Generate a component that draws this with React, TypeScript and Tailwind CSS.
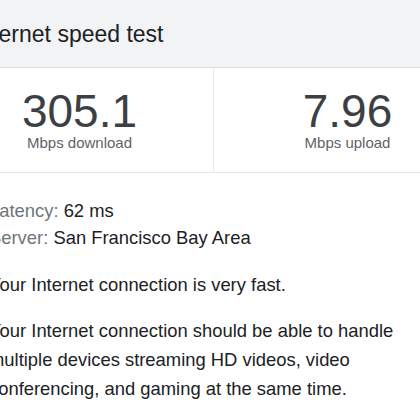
// Speed test result card, cropped on the left like the reference.
const font = { fontFamily: '"Liberation Sans", Arial, sans-serif' }

function Stat({ value, label, divider }: { value: string; label: string; divider?: boolean }) {
  return (
    <div className={`flex flex-col items-center pt-[20px] pb-[20px] ${divider ? 'border-r border-[#e8eaed]' : ''}`}>
      <div className="text-[46px] leading-[46px] text-[#3c4043]">{value}</div>
      <div className="text-[15px] leading-[18px] text-[#5f6368]">{label}</div>
    </div>
  )
}

export default function App() {
  return (
    <div className="w-[420px] h-[420px] overflow-hidden bg-white" style={font}>
      <div className="w-[535px] -ml-[54px]">
        <header className="bg-[#f1f3f4] border-b border-[#dadce0] pl-[27px] pt-[19px] pb-[18px]">
          <h1 className="text-[23px] leading-[30px] text-[#202124] whitespace-nowrap">Internet speed test</h1>
        </header>
        <div className="grid grid-cols-[268px_267px] border-b border-[#e8eaed]">
          <Stat value="305.1" label="Mbps download" divider />
          <Stat value="7.96" label="Mbps upload" />
        </div>
        <div className="pl-[43px] pt-[25px] text-[18.4px] text-[#202124]">
          <div className="leading-[26.5px]">
            <div><span className="text-[#70757a]">Latency:</span> 62 ms</div>
            <div><span className="text-[#70757a]">Server:</span> San Francisco Bay Area</div>
          </div>
          <p className="leading-[29px] mt-[18.7px]">Your Internet connection is very fast.</p>
          <p className="leading-[29px] mt-[17.5px] w-[410px]">
            Your Internet connection should be able to handle multiple devices streaming HD videos, video conferencing, and gaming at the same time.
          </p>
        </div>
      </div>
    </div>
  )
}
